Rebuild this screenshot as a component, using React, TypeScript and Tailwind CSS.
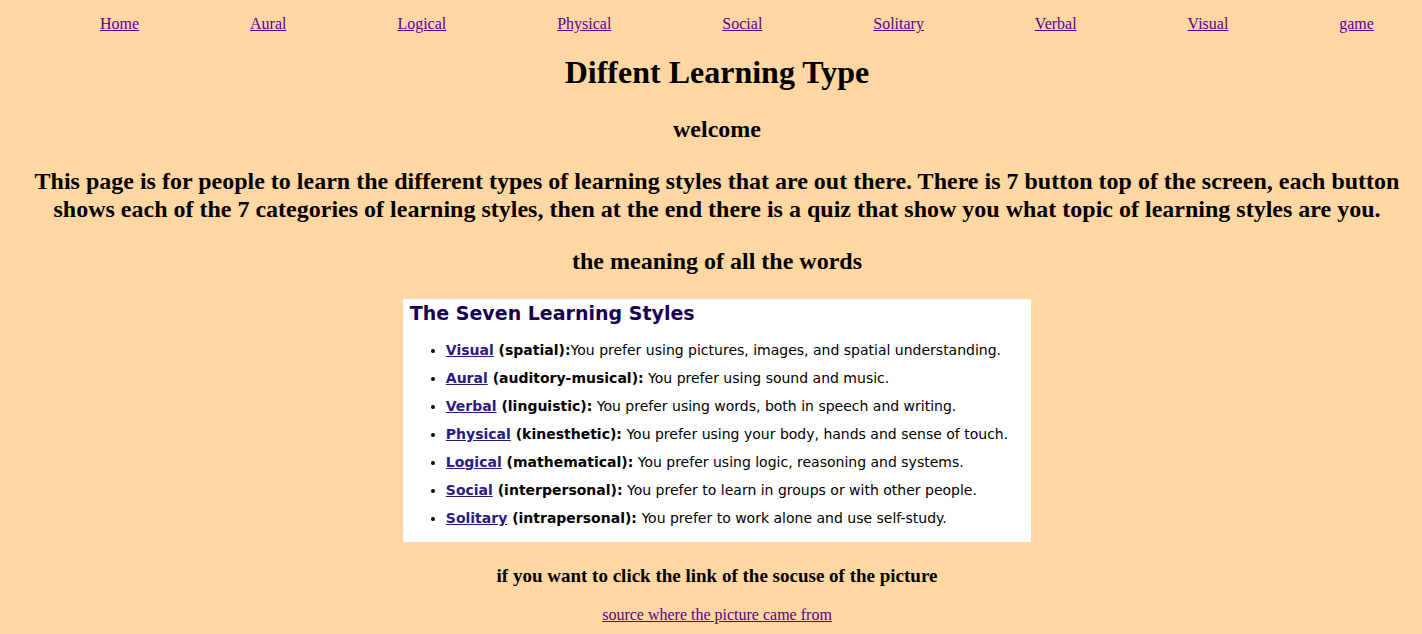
const navLinks = ["Home", "Aural", "Logical", "Physical", "Social", "Solitary", "Verbal", "Visual", "game"];

const styles = [
  { name: "Visual", kind: "(spatial):", gap: "", text: "You prefer using pictures, images, and spatial understanding." },
  { name: "Aural", kind: "(auditory-musical):", gap: " ", text: "You prefer using sound and music." },
  { name: "Verbal", kind: "(linguistic):", gap: " ", text: "You prefer using words, both in speech and writing." },
  { name: "Physical", kind: "(kinesthetic):", gap: " ", text: "You prefer using your body, hands and sense of touch." },
  { name: "Logical", kind: "(mathematical):", gap: " ", text: "You prefer using logic, reasoning and systems." },
  { name: "Social", kind: "(interpersonal):", gap: " ", text: "You prefer to learn in groups or with other people." },
  { name: "Solitary", kind: "(intrapersonal):", gap: " ", text: "You prefer to work alone and use self-study." },
];

export default function App() {
  return (
    <div className="min-h-screen bg-[#ffd7a3] pt-3 pr-2 pb-2 pl-5 font-['Liberation_Serif',serif] text-black">
      <nav className="pr-10 pl-20">
        <ul className="flex justify-between">
          {navLinks.map((name) => (
            <li key={name}>
              <a href={`#${name.toLowerCase()}`} className="text-base leading-5 text-[#5a008c] underline">
                {name}
              </a>
            </li>
          ))}
        </ul>
      </nav>
      <main className="flex flex-col items-center text-center">
        <h1 className="mt-[18px] text-[32px] leading-9 font-bold">Diffent Learning Type</h1>
        <h2 className="mt-[25px] text-2xl leading-7 font-bold">welcome</h2>
        <h2 className="mt-6 text-2xl leading-7 font-bold">
          This page is for people to learn the different types of learning styles that are out there. There is 7 button
          top of the screen, each button shows each of the 7 categories of learning styles, then at the end there is a
          quiz that show you what topic of learning styles are you.
        </h2>
        <h2 className="mt-6 text-2xl leading-7 font-bold">the meaning of all the words</h2>
        <section className="mt-6 bg-white pt-0.5 pr-[23px] pb-2.5 pl-[7px] text-left font-['DejaVu_Sans',sans-serif]">
          <h3 className="text-[19px] leading-6 font-bold text-[#170052]">The Seven Learning Styles</h3>
          <ul className="mt-[11px] list-disc pl-9 text-sm leading-7">
            {styles.map((style) => (
              <li key={style.name}>
                <b>
                  <a href={`#${style.name.toLowerCase()}`} className="text-[#2b1a80] underline">
                    {style.name}
                  </a>{" "}
                  {style.kind}
                </b>
                {style.gap}
                {style.text}
              </li>
            ))}
          </ul>
        </section>
        <h3 className="mt-6 text-[19px] leading-5 font-bold">if you want to click the link of the socuse of the picture</h3>
        <a href="#source" className="mt-[19px] text-base leading-5 text-[#5a008c] underline">
          source where the picture came from
        </a>
      </main>
    </div>
  );
}
